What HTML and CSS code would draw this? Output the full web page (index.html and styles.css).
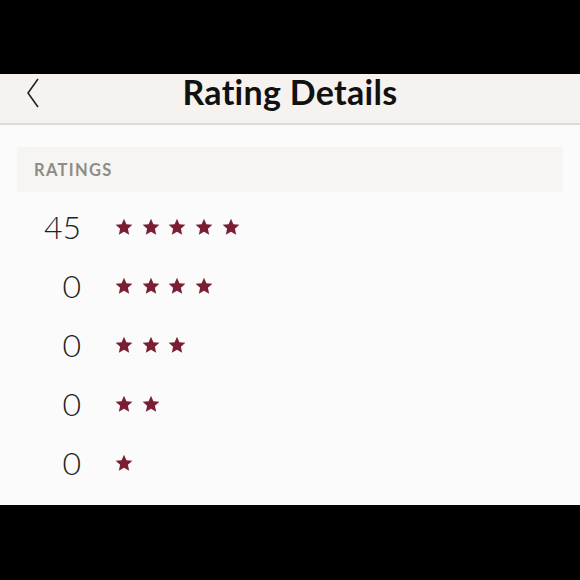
FILE: index.html
```html
<!DOCTYPE html>
<html lang="en">
<head>
    <meta charset="UTF-8">
    <meta name="viewport" content="width=device-width, initial-scale=1.0">
    <title>Rating Details</title>
    <link rel="stylesheet" href="styles.css">
</head>
<body>

<div class="screen">
    <div class="nav-bar">
        <svg class="back" width="14" height="30" viewBox="0 0 14 30">
            <path d="M12 1 L2 15 L12 29" fill="none" stroke="#222" stroke-width="1.6"/>
        </svg>
        <div class="nav-title">Rating Details</div>
    </div>

    <div class="content">
        <div class="section-header">RATINGS</div>

        <div class="rating-row">
            <div class="count">45</div>
            <div class="stars" data-stars="5"></div>
        </div>
        <div class="rating-row">
            <div class="count">0</div>
            <div class="stars" data-stars="4"></div>
        </div>
        <div class="rating-row">
            <div class="count">0</div>
            <div class="stars" data-stars="3"></div>
        </div>
        <div class="rating-row">
            <div class="count">0</div>
            <div class="stars" data-stars="2"></div>
        </div>
        <div class="rating-row">
            <div class="count">0</div>
            <div class="stars" data-stars="1"></div>
        </div>
    </div>
</div>

<script>
    const starSvg = '<svg class="star" width="18" height="18" viewBox="0 0 24 24">' +
        '<path d="M12 1 L15.2 8.3 L23.2 9 L17.2 14.3 L18.9 22.3 L12 18.2 L5.1 22.3 L6.8 14.3 L0.8 9 L8.8 8.3 Z"/></svg>';

    document.querySelectorAll('.stars').forEach(el => {
        const n = parseInt(el.dataset.stars, 10);
        el.innerHTML = starSvg.repeat(n);
    });
</script>

</body>
</html>
```

FILE: styles.css
```css
body {
    margin: 0;
    background-color: #000;
    font-family: Lato, "Open Sans", sans-serif;
}

.screen {
    margin-top: 74px;
    height: 431px;
    background-color: #fbfbfb;
}

.nav-bar {
    position: relative;
    height: 49px;
    background-color: #f6f2ef;
    border-bottom: 2px solid #dcdad8;
    display: flex;
    align-items: flex-start;
    justify-content: center;
}

.back {
    position: absolute;
    left: 26px;
    top: 4px;
}

.nav-title {
    font-size: 34px;
    line-height: 34px;
    font-weight: 700;
    color: #111;
    padding-top: 1px;
    letter-spacing: 0.3px;
}

.content {
    padding: 22px 17px 0;
}

.section-header {
    height: 45px;
    background-color: #f6f5f2;
    padding-left: 17px;
    display: flex;
    align-items: center;
    font-size: 16.5px;
    font-weight: 700;
    letter-spacing: 1.3px;
    color: #8f8c88;
}

.rating-row {
    height: 59px;
    display: flex;
    align-items: center;
}

.section-header + .rating-row {
    margin-top: 5px;
}

.count {
    width: 64px;
    text-align: right;
    font-size: 32px;
    font-weight: 300;
    color: #222;
}

.stars {
    margin-left: 34px;
    display: flex;
    gap: 8.7px;
}

.star {
    fill: #7c1e33;
}
```
